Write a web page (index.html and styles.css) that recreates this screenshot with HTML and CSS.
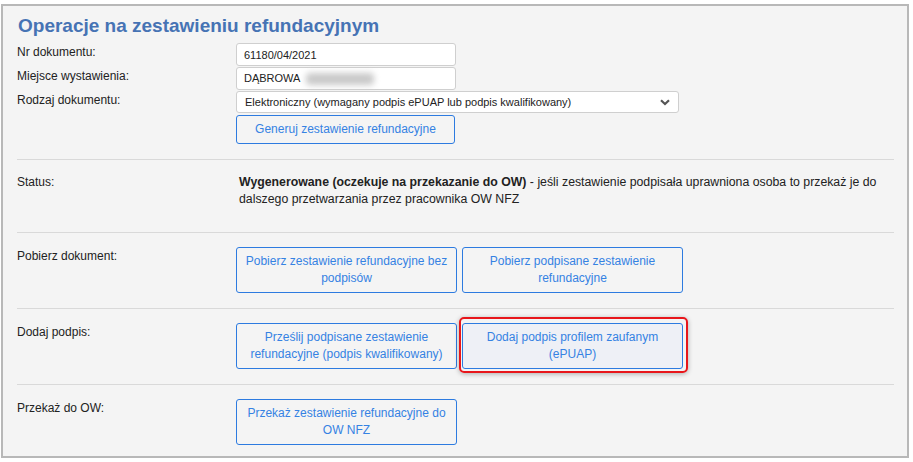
FILE: index.html
```html
<!DOCTYPE html>
<html lang="pl">
<head>
<meta charset="utf-8">
<title>Operacje na zestawieniu refundacyjnym</title>
<link rel="stylesheet" href="styles.css">
</head>
<body>
<div class="panel">
  <h1 class="title">Operacje na zestawieniu refundacyjnym</h1>

  <div class="form">
    <div class="row">
      <div class="label">Nr dokumentu:</div>
      <div class="field"><input class="input" type="text" value="61180/04/2021"></div>
    </div>
    <div class="row">
      <div class="label">Miejsce wystawienia:</div>
      <div class="field"><div class="input fake-input">DĄBROWA <span class="redacted"></span></div></div>
    </div>
    <div class="row">
      <div class="label">Rodzaj dokumentu:</div>
      <div class="field">
        <div class="select-wrap">
          <select class="select">
            <option>Elektroniczny (wymagany podpis ePUAP lub podpis kwalifikowany)</option>
          </select>
          <svg class="chevron" width="10" height="7" viewBox="0 0 10 7"><path d="M1 1.2 L5 5 L9 1.2" fill="none" stroke="#555" stroke-width="2.2"/></svg>
        </div>
      </div>
    </div>
    <div class="row">
      <div class="label"></div>
      <div class="field"><button class="btn btn-single">Generuj zestawienie refundacyjne</button></div>
    </div>
  </div>

  <div class="section status-section">
    <div class="label">Status:</div>
    <p class="status-text"><strong class="status-strong">Wygenerowane (oczekuje na przekazanie do OW)</strong><span> - jeśli zestawienie podpisała uprawniona osoba to przekaż je do</span><br><span>dalszego przetwarzania przez pracownika OW NFZ</span></p>
  </div>

  <div class="section">
    <div class="label">Pobierz dokument:</div>
    <div class="buttons">
      <button class="btn">Pobierz zestawienie refundacyjne bez podpisów</button>
      <button class="btn">Pobierz podpisane zestawienie refundacyjne</button>
    </div>
  </div>

  <div class="section">
    <div class="label">Dodaj podpis:</div>
    <div class="buttons">
      <button class="btn">Prześlij podpisane zestawienie refundacyjne (podpis kwalifikowany)</button>
      <div class="highlight-wrap">
        <button class="btn btn-active">Dodaj podpis profilem zaufanym (ePUAP)</button>
        <span class="highlight"></span>
      </div>
    </div>
  </div>

  <div class="section last">
    <div class="label">Przekaż do OW:</div>
    <div class="buttons">
      <button class="btn">Przekaż zestawienie refundacyjne do OW NFZ</button>
    </div>
  </div>
</div>
</body>
</html>
```

FILE: styles.css
```css
* { box-sizing: border-box; }

body {
  margin: 0;
  background: #ffffff;
  font-family: "Liberation Sans", Arial, sans-serif;
  font-size: 12px;
  color: #222;
}

.panel {
  margin: 4px 4px 0 1px;
  width: 908px;
  height: 454px;
  border: 2px solid #b8b8b8;
  background: #f4f4f4;
  padding: 8px 13px 0 14px;
}

.title {
  margin: 0 0 5px 0;
  font-size: 19px;
  line-height: 24px;
  font-weight: bold;
  color: #4673b4;
  padding-left: 1px;
}

.form {
  padding-bottom: 14px;
  border-bottom: 1px solid #d9d9d9;
}

.row {
  display: flex;
  margin-bottom: 1px;
}

.row:nth-child(3) { margin-top: 1px; margin-bottom: 2px; }

.label {
  width: 219px;
  flex: none;
  line-height: 17px;
  padding-top: 1px;
  color: #222;
}

.field { flex: none; }

.input {
  display: block;
  width: 220px;
  height: 23px;
  border: 1px solid #cfcfcf;
  border-radius: 3px;
  background: #fff;
  font-family: "Liberation Sans", Arial, sans-serif;
  font-size: 11px;
  color: #222;
  padding: 0 7px;
  margin: 0;
  outline: none;
}

.fake-input {
  display: flex;
  align-items: center;
  line-height: 21px;
}

.redacted {
  display: inline-block;
  width: 68px;
  height: 12px;
  margin-left: 6px;
  background: #c9c9c9;
  border-radius: 4px;
  filter: blur(3px);
}

.select-wrap {
  position: relative;
  width: 443px;
  height: 22px;
}

.select {
  appearance: none;
  -webkit-appearance: none;
  width: 100%;
  height: 22px;
  border: 1px solid #cfcfcf;
  border-radius: 3px;
  background: #fff;
  font-family: "Liberation Sans", Arial, sans-serif;
  font-size: 11px;
  color: #222;
  padding: 0 8px;
  margin: 0;
  outline: none;
}

.chevron {
  position: absolute;
  right: 9px;
  top: 8px;
  pointer-events: none;
}

.btn {
  width: 221px;
  border: 1px solid #2d7be0;
  border-radius: 3px;
  background: transparent;
  color: #3582e3;
  font-family: "Liberation Sans", Arial, sans-serif;
  font-size: 12px;
  line-height: 17px;
  padding: 5px 8px;
  margin: 0;
  text-align: center;
  cursor: pointer;
}

.btn-single {
  width: 219px;
}

.section {
  display: flex;
  padding: 14px 0 15px 0;
  border-bottom: 1px solid #d9d9d9;
}

.section.last {
  border-bottom: none;
}

.status-section {
  padding: 13px 0 24px 0;
}

.status-text {
  flex: 1;
  margin: 0;
  font-size: 12.3px;
  line-height: 17px;
  padding-left: 3px;
  padding-top: 1px;
  color: #222;
}

.status-strong {
  font-weight: bold;
  color: #222;
}

.buttons {
  display: flex;
  gap: 5px;
}

.highlight-wrap {
  position: relative;
}

.btn-active {
  background: #eef0f6;
  display: block;
}

.highlight {
  position: absolute;
  left: -3px;
  right: -5px;
  top: -6px;
  bottom: -4px;
  border: 2px solid #e8161b;
  border-radius: 5px;
  box-shadow: 0 1px 5px rgba(0, 0, 0, 0.3);
  pointer-events: none;
}
```
